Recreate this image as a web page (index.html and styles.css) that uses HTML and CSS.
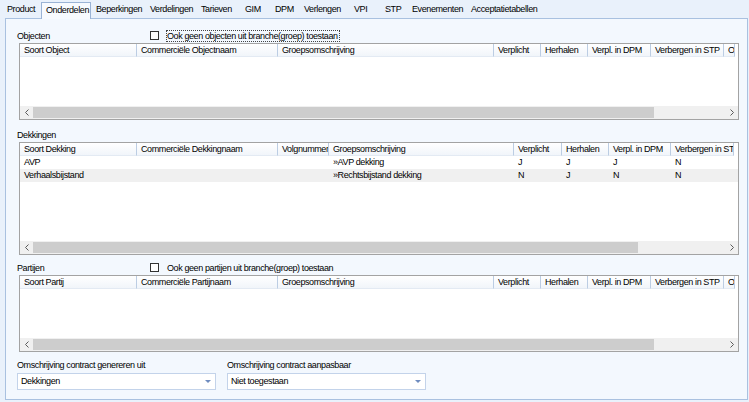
FILE: index.html
```html
<!DOCTYPE html>
<html lang="nl">
<head>
<meta charset="utf-8">
<title>Onderdelen</title>
<link rel="stylesheet" href="styles.css">
</head>
<body>
<div class="window">
  <div class="tabstrip">
    <span class="tab t-product">Product</span>
    <span class="tab tab-active t-onderdelen">Onderdelen</span>
    <span class="tab t-beperkingen">Beperkingen</span>
    <span class="tab t-verdelingen">Verdelingen</span>
    <span class="tab t-tarieven">Tarieven</span>
    <span class="tab t-gim">GIM</span>
    <span class="tab t-dpm">DPM</span>
    <span class="tab t-verlengen">Verlengen</span>
    <span class="tab t-vpi">VPI</span>
    <span class="tab t-stp">STP</span>
    <span class="tab t-evenementen">Evenementen</span>
    <span class="tab t-accept">Acceptatietabellen</span>
  </div>

  <div class="panel">
    <div class="section-head">
      <span class="section-label">Objecten</span>
      <span class="checkbox"></span>
      <span class="check-text focused">Ook geen objecten uit branche(groep) toestaan</span>
    </div>
    <div class="grid grid-small">
      <div class="grid-header cols-obj">
        <span class="hcell">Soort Object</span>
        <span class="hcell">Commerciële Objectnaam</span>
        <span class="hcell">Groepsomschrijving</span>
        <span class="hcell">Verplicht</span>
        <span class="hcell">Herhalen</span>
        <span class="hcell">Verpl. in DPM</span>
        <span class="hcell">Verbergen in STP</span>
        <span class="hcell">O</span>
      </div>
      <div class="grid-body"></div>
      <div class="hscroll">
        <span class="sbtn"><svg width="4" height="7" viewBox="0 0 4 7"><polyline points="3.5,0.5 0.5,3.5 3.5,6.5" fill="none" stroke="#5a5a5a" stroke-width="1"/></svg></span>
        <span class="thumb thumb-obj"></span>
        <span class="track"></span>
        <span class="sbtn"><svg width="4" height="7" viewBox="0 0 4 7"><polyline points="0.5,0.5 3.5,3.5 0.5,6.5" fill="none" stroke="#5a5a5a" stroke-width="1"/></svg></span>
      </div>
    </div>

    <div class="section-head gap-dek">
      <span class="section-label">Dekkingen</span>
    </div>
    <div class="grid grid-large">
      <div class="grid-header cols-dek">
        <span class="hcell">Soort Dekking</span>
        <span class="hcell">Commerciële Dekkingnaam</span>
        <span class="hcell">Volgnummer</span>
        <span class="hcell">Groepsomschrijving</span>
        <span class="hcell">Verplicht</span>
        <span class="hcell">Herhalen</span>
        <span class="hcell">Verpl. in DPM</span>
        <span class="hcell">Verbergen in STP</span>
      </div>
      <div class="grid-body">
        <div class="row cols-dek">
          <span class="cell">AVP</span>
          <span class="cell"></span>
          <span class="cell"></span>
          <span class="cell">»AVP dekking</span>
          <span class="cell">J</span>
          <span class="cell">J</span>
          <span class="cell">J</span>
          <span class="cell">N</span>
        </div>
        <div class="row row-alt cols-dek">
          <span class="cell">Verhaalsbijstand</span>
          <span class="cell"></span>
          <span class="cell"></span>
          <span class="cell">»Rechtsbijstand dekking</span>
          <span class="cell">N</span>
          <span class="cell">J</span>
          <span class="cell">N</span>
          <span class="cell">N</span>
        </div>
      </div>
      <div class="hscroll">
        <span class="sbtn"><svg width="4" height="7" viewBox="0 0 4 7"><polyline points="3.5,0.5 0.5,3.5 3.5,6.5" fill="none" stroke="#5a5a5a" stroke-width="1"/></svg></span>
        <span class="thumb thumb-dek"></span>
        <span class="track"></span>
        <span class="sbtn"><svg width="4" height="7" viewBox="0 0 4 7"><polyline points="0.5,0.5 3.5,3.5 0.5,6.5" fill="none" stroke="#5a5a5a" stroke-width="1"/></svg></span>
      </div>
    </div>

    <div class="section-head gap-par">
      <span class="section-label">Partijen</span>
      <span class="checkbox"></span>
      <span class="check-text">Ook geen partijen uit branche(groep) toestaan</span>
    </div>
    <div class="grid grid-small">
      <div class="grid-header cols-obj">
        <span class="hcell">Soort Partij</span>
        <span class="hcell">Commerciële Partijnaam</span>
        <span class="hcell">Groepsomschrijving</span>
        <span class="hcell">Verplicht</span>
        <span class="hcell">Herhalen</span>
        <span class="hcell">Verpl. in DPM</span>
        <span class="hcell">Verbergen in STP</span>
        <span class="hcell">O</span>
      </div>
      <div class="grid-body"></div>
      <div class="hscroll">
        <span class="sbtn"><svg width="4" height="7" viewBox="0 0 4 7"><polyline points="3.5,0.5 0.5,3.5 3.5,6.5" fill="none" stroke="#5a5a5a" stroke-width="1"/></svg></span>
        <span class="thumb thumb-obj"></span>
        <span class="track"></span>
        <span class="sbtn"><svg width="4" height="7" viewBox="0 0 4 7"><polyline points="0.5,0.5 3.5,3.5 0.5,6.5" fill="none" stroke="#5a5a5a" stroke-width="1"/></svg></span>
      </div>
    </div>

    <div class="bottom">
      <div class="field">
        <div class="field-label">Omschrijving contract genereren uit</div>
        <div class="select"><span class="select-value">Dekkingen</span><span class="caret"></span></div>
      </div>
      <div class="field">
        <div class="field-label">Omschrijving contract aanpasbaar</div>
        <div class="select"><span class="select-value">Niet toegestaan</span><span class="caret"></span></div>
      </div>
    </div>
  </div>
</div>
</body>
</html>
```

FILE: styles.css
```css
* { box-sizing: border-box; }

html, body {
  margin: 0;
  padding: 0;
}

body {
  width: 749px;
  height: 402px;
  overflow: hidden;
  background: #e9f1fb;
  font-family: "Liberation Sans", Arial, sans-serif;
  font-size: 9px;
  letter-spacing: -0.4px;
  color: #000;
}

.window {
  height: 402px;
}

/* ---------- tabs ---------- */
.tabstrip {
  height: 18px;
  display: flex;
  align-items: flex-start;
  padding-left: 2px;
}

.tab {
  flex: none;
  height: 18px;
  line-height: 19px;
  padding-left: 5px;
  white-space: nowrap;
  color: #000;
}

.tab-active {
  position: relative;
  z-index: 1;
  margin-top: 2px;
  height: 17px;
  line-height: 14px;
  padding-left: 4px;
  background: #f7fafe;
  border: 1px solid #9ab3d5;
  border-bottom: none;
}

.t-product { width: 39px; }
.t-onderdelen { width: 50px; }
.t-beperkingen { width: 54px; }
.t-verdelingen { width: 51px; }
.t-tarieven { width: 44px; }
.t-gim { width: 30px; }
.t-dpm { width: 29px; }
.t-verlengen { width: 50px; }
.t-vpi { width: 31px; }
.t-stp { width: 27px; }
.t-evenementen { width: 59px; }
.t-accept { width: 76px; }

/* ---------- panel ---------- */
.panel {
  margin-left: 5px;
  width: 743px;
  height: 382px;
  border: 1px solid #a9c1e0;
  background: #f3f8fe;
  padding: 9px 0 0 11px;
}

.section-head {
  display: flex;
  align-items: center;
  height: 15px;
}

.gap-dek { margin-top: 7px; }
.gap-par { margin-top: 5px; }

.section-label {
  width: 133px;
  flex: none;
}

.checkbox {
  width: 9px;
  height: 9px;
  flex: none;
  border: 1px solid #333;
  background: #fff;
}

.check-text {
  margin-left: 7px;
  padding: 0 1px 0 0;
  line-height: 10px;
  border: 1px solid transparent;
}

.check-text.focused {
  border: 1px dotted #444;
}

/* ---------- grids ---------- */
.grid {
  margin-left: 2px;
  width: 720px;
  border: 1px solid #a3a3a3;
  background: #fff;
  display: flex;
  flex-direction: column;
}

.grid-small { height: 77px; }
.grid-large { height: 113px; }

.cols-obj {
  display: grid;
  grid-template-columns: 117px 141px 216px 47px 47px 63px 73px 11px;
}

.cols-dek {
  display: grid;
  grid-template-columns: 117px 141px 51px 185px 48px 47px 62px 63px;
}

.grid-header {
  height: 13px;
  flex: none;
}

.hcell {
  height: 13px;
  line-height: 13px;
  padding-left: 4px;
  white-space: nowrap;
  overflow: hidden;
  background: linear-gradient(#ffffff, #f1f5fa);
  border-right: 1px solid #bccde3;
  border-bottom: 1px solid #e3eaf3;
}

.grid-body {
  flex: 1;
  background: #fff;
}

.row {
  height: 13px;
}

.row-alt {
  background: #f0f0f0;
}

.cell {
  line-height: 13px;
  padding-left: 4px;
  white-space: nowrap;
  overflow: hidden;
}

.hscroll {
  height: 13px;
  flex: none;
  display: flex;
  background: #f0f0f0;
}

.sbtn {
  width: 13px;
  flex: none;
  display: flex;
  align-items: center;
  justify-content: center;
}

.thumb {
  flex: none;
  background: #cdcdcd;
  margin: 1px 0;
}

.thumb-obj { width: 621px; }
.thumb-dek { width: 605px; }

.track { flex: 1; }

/* ---------- bottom fields ---------- */
.bottom {
  margin-top: 7px;
  display: flex;
  gap: 11px;
}

.field {
  width: 199px;
}

.field-label {
  line-height: 13px;
  white-space: nowrap;
}

.select {
  margin-top: 1px;
  height: 17px;
  border: 1px solid #c3d3ea;
  background: #fff;
  display: flex;
  align-items: center;
  padding-left: 3px;
}

.select-value {
  flex: 1;
  line-height: 15px;
}

.caret {
  width: 0;
  height: 0;
  margin-right: 4px;
  border-left: 3px solid transparent;
  border-right: 3px solid transparent;
  border-top: 3px solid #6f8cbf;
}
```
